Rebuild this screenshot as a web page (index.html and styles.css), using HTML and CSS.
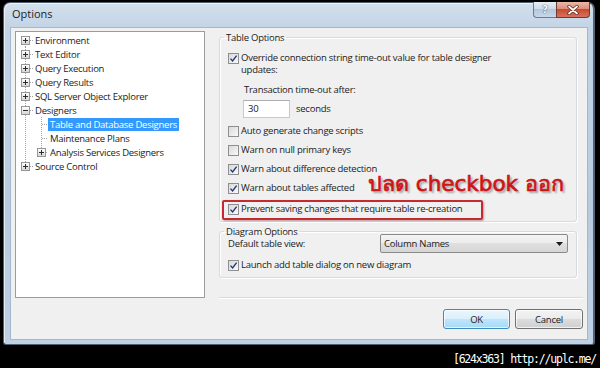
FILE: index.html
```html
<!DOCTYPE html>
<html lang="en">
<head>
    <meta charset="UTF-8">
    <meta name="viewport" content="width=device-width, initial-scale=1.0">
    <title>Options</title>
    <link rel="stylesheet" href="styles.css">
</head>
<body>
    <div class="window">
        <div class="titlebar">
            <span class="title">Options</span>
            <div class="caption-buttons">
                <span class="cap-btn help">?</span>
                <span class="cap-btn close">
                    <svg width="12" height="10" viewBox="0 0 12 10">
                        <path d="M2 1.5 L10 8.5 M10 1.5 L2 8.5" stroke="#5a2a22" stroke-width="3.4" stroke-linecap="round"/>
                        <path d="M2 1.5 L10 8.5 M10 1.5 L2 8.5" stroke="#fff" stroke-width="1.8" stroke-linecap="round"/>
                    </svg>
                </span>
            </div>
        </div>

        <div class="client">
            <!-- left: category tree -->
            <ul class="tree">
                <li class="node r-first"><span class="exp plus"></span><span class="txt">Environment</span></li>
                <li class="node r-mid"><span class="exp plus"></span><span class="txt">Text Editor</span></li>
                <li class="node r-mid"><span class="exp plus"></span><span class="txt">Query Execution</span></li>
                <li class="node r-mid"><span class="exp plus"></span><span class="txt">Query Results</span></li>
                <li class="node r-mid"><span class="exp plus"></span><span class="txt">SQL Server Object Explorer</span></li>
                <li class="node r-mid"><span class="exp minus"></span><span class="txt">Designers</span></li>
                <li class="node child c-mid"><span class="exp none"></span><span class="txt selected">Table and Database Designers</span></li>
                <li class="node child c-mid"><span class="exp none"></span><span class="txt">Maintenance Plans</span></li>
                <li class="node child c-last"><span class="exp plus"></span><span class="txt">Analysis Services Designers</span></li>
                <li class="node r-last"><span class="exp plus"></span><span class="txt">Source Control</span></li>
            </ul>

            <!-- right: option pages -->
            <div class="pane">
                <fieldset class="group table-opts">
                    <legend>Table Options</legend>
                    <div class="check multi">
                        <span class="box on"><svg width="9" height="9" viewBox="0 0 9 9"><path d="M1.5 4.6 L3.6 7 L7.6 1.6" fill="none" stroke="#22397a" stroke-width="1.4"/></svg></span>
                        <span>Override connection string time-out value for table designer<br>updates:</span>
                    </div>
                    <div class="timeout">
                        <div>Transaction time-out after:</div>
                        <div class="timeout-row">
                            <span class="textbox">30</span>
                            <span>seconds</span>
                        </div>
                    </div>
                    <div class="check">
                        <span class="box"></span>
                        <span>Auto generate change scripts</span>
                    </div>
                    <div class="check">
                        <span class="box"></span>
                        <span>Warn on null primary keys</span>
                    </div>
                    <div class="check">
                        <span class="box on"><svg width="9" height="9" viewBox="0 0 9 9"><path d="M1.5 4.6 L3.6 7 L7.6 1.6" fill="none" stroke="#22397a" stroke-width="1.4"/></svg></span>
                        <span>Warn about difference detection</span>
                    </div>
                    <div class="check">
                        <span class="box on"><svg width="9" height="9" viewBox="0 0 9 9"><path d="M1.5 4.6 L3.6 7 L7.6 1.6" fill="none" stroke="#22397a" stroke-width="1.4"/></svg></span>
                        <span>Warn about tables affected</span>
                    </div>
                    <div class="check marked">
                        <span class="box on"><svg width="9" height="9" viewBox="0 0 9 9"><path d="M1.5 4.6 L3.6 7 L7.6 1.6" fill="none" stroke="#22397a" stroke-width="1.4"/></svg></span>
                        <span>Prevent saving changes that require table re-creation</span>
                    </div>
                </fieldset>

                <fieldset class="group diagram-opts">
                    <legend>Diagram Options</legend>
                    <div class="field-row">
                        <span class="field-label">Default table view:</span>
                        <div class="combo">
                            <span>Column Names</span>
                            <svg width="7" height="4" viewBox="0 0 7 4"><path d="M0 0 H7 L3.5 4 Z" fill="#1a1a1a"/></svg>
                        </div>
                    </div>
                    <div class="check">
                        <span class="box on"><svg width="9" height="9" viewBox="0 0 9 9"><path d="M1.5 4.6 L3.6 7 L7.6 1.6" fill="none" stroke="#22397a" stroke-width="1.4"/></svg></span>
                        <span>Launch add table dialog on new diagram</span>
                    </div>
                </fieldset>

                <div class="separator"></div>
                <div class="buttons">
                    <button class="btn default">OK</button>
                    <button class="btn">Cancel</button>
                </div>

                <!-- annotation drawn over the dialog -->
                <span class="note">ปลด checkbok ออก</span>
            </div>
        </div>
    </div>
    <div class="watermark">[624x363] http://uplc.me/</div>
</body>
</html>
```

FILE: styles.css
```css
body {
    margin: 0;
    padding: 2px 0 0 3px;
    width: 600px;
    height: 368px;
    box-sizing: border-box;
    overflow: hidden;
    background: #000;
    font-family: "Open Sans", "Noto Sans", sans-serif;
    font-size: 9.5px;
    letter-spacing: -0.25px;
    color: #1b1b1b;
}
.window {
    width: 592px;
    height: 343px;
    box-sizing: border-box;
    border: 1px solid #4f5e70;
    border-right: 2px solid #556476;
    border-radius: 7px 7px 3px 3px;
    padding: 0 5px 4px 6px;
    background: linear-gradient(to bottom, #d3e0ed 0, #c3d4e6 24px, #b7cadf 60%, #bfd1e4 100%);
    box-shadow: inset 1px 1px 0 rgba(255, 255, 255, 0.6);
    display: flex;
    flex-direction: column;
}
.titlebar {
    height: 24px;
    display: flex;
    justify-content: space-between;
    align-items: flex-start;
}
.title {
    margin-top: 3px;
    padding-left: 2px;
    font-size: 11px;
    letter-spacing: 0;
    color: #1e2328;
}
.caption-buttons {
    display: flex;
    margin: -1px -2px 0 0;
}
.cap-btn {
    height: 16px;
    box-sizing: border-box;
    display: flex;
    align-items: center;
    justify-content: center;
}
.help {
    width: 23px;
    border: 1px solid #6b7c90;
    border-top: none;
    border-right: none;
    border-radius: 0 0 0 4px;
    background: linear-gradient(to bottom, #e6eef7 0, #cbd9e8 50%, #b3c6db 50%, #c9d8e8 100%);
    color: #fff;
    font-family: "DejaVu Sans", sans-serif;
    font-weight: bold;
    font-size: 10px;
    text-shadow: 0 0 1px #3b4b5e, 0 0 1px #3b4b5e;
}
.close {
    width: 34px;
    border: 1px solid #6a3b34;
    border-top: none;
    border-radius: 0 0 4px 0;
    background: linear-gradient(to bottom, #ecb6a6 0, #dc8a75 50%, #c94a31 50%, #d7745c 100%);
}

.client {
    flex: 1;
    background: #f0f0f0;
    border: 1px solid #a6b7c9;
    padding: 3px 4px 10px 4px;
    display: grid;
    grid-template-columns: 190px 1fr;
    column-gap: 14px;
}

/* tree */
.tree {
    --dv: repeating-linear-gradient(to bottom, #a3a3a3 0 1px, transparent 1px 2px);
    --dh: repeating-linear-gradient(to right, #a3a3a3 0 1px, transparent 1px 2px);
    align-self: start;
    height: 267px;
    box-sizing: border-box;
    margin: 0;
    padding: 1px 0 0 0;
    list-style: none;
    background: #fff;
    border: 1px solid #9c9c9c;
}
.node {
    height: 14px;
    display: flex;
    align-items: center;
    padding-left: 5px;
    background-repeat: no-repeat;
}
.node.child {
    padding-left: 21px;
}
.r-first {
    background: var(--dv) 9px 7px / 1px 7px no-repeat, var(--dh) 14px 7px / 4px 1px no-repeat;
}
.r-mid {
    background: var(--dv) 9px 0 / 1px 14px no-repeat, var(--dh) 14px 7px / 4px 1px no-repeat;
}
.r-last {
    background: var(--dv) 9px 0 / 1px 7px no-repeat, var(--dh) 14px 7px / 4px 1px no-repeat;
}
.c-mid {
    background: var(--dv) 9px 0 / 1px 14px no-repeat, var(--dv) 25px 0 / 1px 14px no-repeat, var(--dh) 26px 7px / 6px 1px no-repeat;
}
.c-last {
    background: var(--dv) 9px 0 / 1px 14px no-repeat, var(--dv) 25px 0 / 1px 7px no-repeat, var(--dh) 30px 7px / 2px 1px no-repeat;
}
.exp {
    width: 9px;
    height: 9px;
    box-sizing: border-box;
    margin-right: 3px;
    border: 1px solid #969696;
    background: linear-gradient(to bottom, #fff, #dcdcdc);
}
.child .exp {
    margin-right: 2px;
}
.exp.plus {
    background: linear-gradient(#2b2b2b, #2b2b2b) center / 5px 1px no-repeat,
                linear-gradient(#2b2b2b, #2b2b2b) center / 1px 5px no-repeat,
                linear-gradient(to bottom, #fff, #d6d6d6);
}
.exp.minus {
    background: linear-gradient(#2b2b2b, #2b2b2b) center / 5px 1px no-repeat,
                linear-gradient(to bottom, #fff, #d6d6d6);
}
.exp.none {
    border: none;
    background: none;
}
.txt {
    padding: 0 2px;
    line-height: 13px;
    white-space: nowrap;
}
.txt.selected {
    background: #3399ff;
    color: #fff;
}

/* option pages */
.pane {
    position: relative;
    display: flex;
    flex-direction: column;
    min-width: 0;
}
.group {
    margin: 0 6px 0 0;
    min-width: 0;
    border: 1px solid #d5dbe1;
    border-radius: 3px;
    box-shadow: 1px 1px 0 #fff, inset 1px 1px 0 #fff;
    padding: 8px 8px 1px 8px;
}
.group legend {
    padding: 0 2px;
    margin-left: -4px;
    line-height: 13px;
}
.check {
    display: flex;
    align-items: center;
    line-height: 12px;
    margin-top: 7px;
}
.check.multi {
    align-items: flex-start;
    margin-top: 0;
}
.check.multi .box {
    margin-top: 1px;
}
.box {
    width: 11px;
    height: 11px;
    box-sizing: border-box;
    margin-right: 2px;
    flex: none;
    border: 1px solid #8f8f8f;
    background: linear-gradient(135deg, #d9d9d9, #f9f9f9);
    display: flex;
    align-items: center;
    justify-content: center;
}
.timeout {
    margin: 8px 0 0 16px;
    line-height: 12px;
}
.timeout-row {
    display: flex;
    align-items: center;
    gap: 6px;
    margin: 4px 0 0 -1px;
}
.textbox {
    width: 47px;
    height: 18px;
    box-sizing: border-box;
    padding-left: 4px;
    line-height: 16px;
    background: #fff;
    border: 1px solid #c5cad0;
    border-top-color: #abadb3;
}
.check.marked {
    width: max-content;
    margin: 6px 0 0 -6px;
    padding: 1px 19px 3px 4px;
    border: 2px solid #c42a2f;
    border-radius: 2px;
    box-shadow: 1px 1px 2px rgba(90, 0, 0, 0.35);
}
.diagram-opts {
    margin-top: 3px;
    padding: 0 8px 6px 8px;
}
.field-row {
    display: flex;
    align-items: center;
    margin-top: -4px;
}
.field-label {
    width: 152px;
    flex: none;
}
.combo {
    flex: 1;
    height: 19px;
    box-sizing: border-box;
    display: flex;
    align-items: center;
    justify-content: space-between;
    padding: 0 4px 0 3px;
    border: 1px solid #8a8a8a;
    border-radius: 2px;
    background: linear-gradient(to bottom, #f4f4f4 0, #ececec 50%, #e0e0e0 50%, #d6d6d6 100%);
}
.diagram-opts .check {
    margin-top: 6px;
}
.separator {
    margin: auto 0 10px 0;
    border-top: 1px solid #d5dbe1;
    border-bottom: 1px solid #fff;
}
.buttons {
    display: flex;
    justify-content: flex-end;
    gap: 5px;
}
.btn {
    width: 68px;
    height: 20px;
    padding: 0;
    font-family: inherit;
    font-size: 9.5px;
    letter-spacing: -0.25px;
    color: #1b1b1b;
    border: 1px solid #707070;
    border-radius: 3px;
    background: linear-gradient(to bottom, #f3f3f3 0, #ebebeb 50%, #dddddd 50%, #cfcfcf 100%);
    box-shadow: inset 0 0 0 1px rgba(255, 255, 255, 0.7);
}
.btn.default {
    width: 67px;
    border-color: #3d8bbd;
    background: linear-gradient(to bottom, #eaf6fd 0, #d9f0fc 50%, #bee6fd 50%, #a7d9f5 100%);
}
.note {
    position: absolute;
    left: 149px;
    top: 142px;
    font-family: "DejaVu Sans", sans-serif;
    font-size: 21.5px;
    line-height: 22px;
    letter-spacing: 0;
    color: #cc1518;
    -webkit-text-stroke: 0.7px #cc1518;
    text-shadow: 2px 2px 2px rgba(0, 0, 0, 0.35);
    white-space: nowrap;
}

.watermark {
    margin-top: 7px;
    padding-right: 4px;
    text-align: right;
    font-family: "DejaVu Sans Mono", monospace;
    font-size: 11.5px;
    letter-spacing: -1.2px;
    line-height: 14px;
    color: #fff;
}
```
